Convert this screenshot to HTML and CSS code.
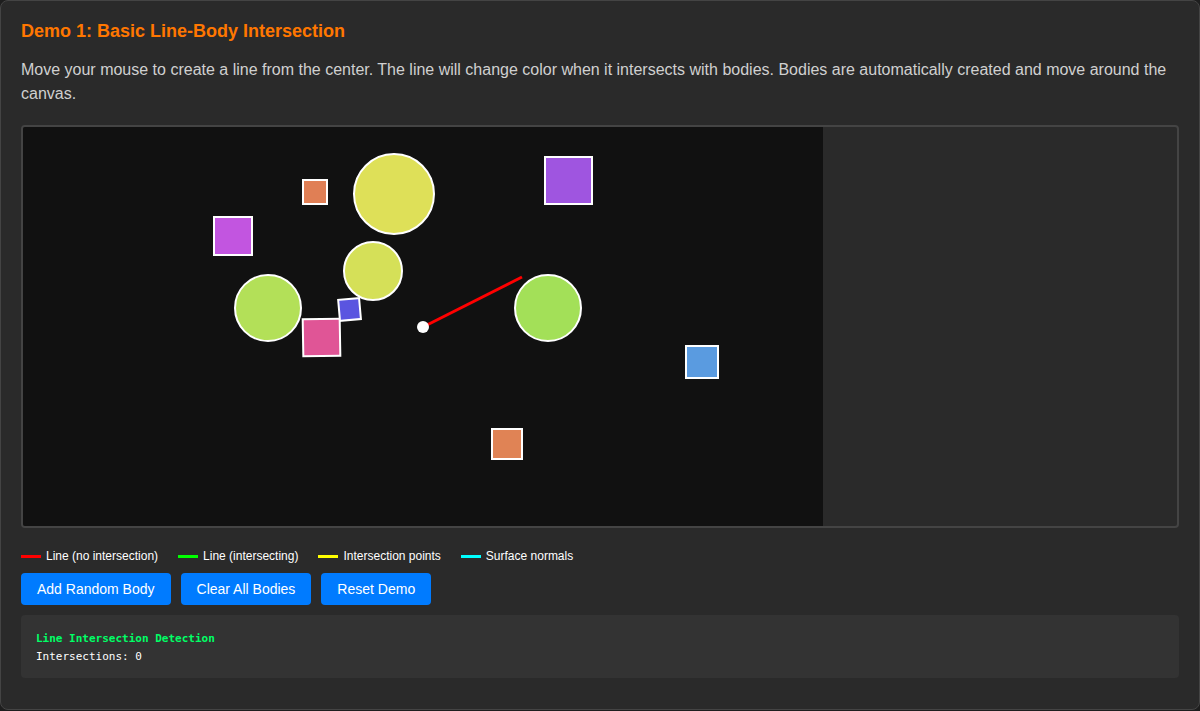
FILE: index.html
```html
<!DOCTYPE html>
<html>
<head>
<meta charset="utf-8">
<link rel="stylesheet" href="styles.css">
</head>
<body>
<div class="demo">
  <h2 class="title">Demo 1: Basic Line-Body Intersection</h2>
  <p class="desc">Move your mouse to create a line from the center. The line will change color when it intersects with bodies. Bodies are automatically created and move around the canvas.</p>
  <div class="canvas-wrap">
    <svg class="canvas" width="800" height="400" viewBox="0 0 800 400">
      <rect x="0" y="0" width="800" height="400" fill="#111"/>
      <g transform="translate(0 1)">
        <g stroke="#fff" stroke-width="2">
          <rect x="280" y="52" width="24" height="24" fill="#e07f55"/>
          <circle cx="371" cy="66" r="40" fill="#dee058"/>
          <rect x="191" y="89" width="38" height="38" fill="#c255e0"/>
          <rect x="522" y="29" width="47" height="47" fill="#9f55e0"/>
          <circle cx="350" cy="143" r="29" fill="#d5e058"/>
          <circle cx="245" cy="180" r="33" fill="#b3e058"/>
          <circle cx="525" cy="180" r="33" fill="#a3e058"/>
          <rect x="280" y="191" width="37" height="37" fill="#e05596" transform="rotate(-1 298 209)"/>
          <rect x="316" y="171" width="21" height="21" fill="#5a55e0" transform="rotate(-5 326 181)"/>
          <rect x="663" y="218" width="32" height="32" fill="#5a9be0"/>
          <rect x="469" y="301" width="30" height="30" fill="#e08355"/>
        </g>
        <line x1="400" y1="199" x2="499" y2="149" stroke="#f00" stroke-width="3"/>
        <circle cx="400" cy="199" r="6" fill="#fff"/>
      </g>
    </svg>
  </div>
  <div class="legend">
    <span class="item"><i class="sw red"></i>Line (no intersection)</span>
    <span class="item"><i class="sw green"></i>Line (intersecting)</span>
    <span class="item"><i class="sw yellow"></i>Intersection points</span>
    <span class="item"><i class="sw cyan"></i>Surface normals</span>
  </div>
  <div class="buttons">
    <button class="btn">Add Random Body</button>
    <button class="btn">Clear All Bodies</button>
    <button class="btn">Reset Demo</button>
  </div>
  <div class="info">
    <div class="info-title">Line Intersection Detection</div>
    <div>Intersections: 0</div>
  </div>
</div>
</body>
</html>
```
FILE: styles.css
```css
html, body {
  margin: 0;
  padding: 0;
  background: #1e1e1e;
}
body {
  font-family: "Liberation Sans", Arial, sans-serif;
  color: #ddd;
}
.demo {
  box-sizing: border-box;
  width: 1200px;
  height: 710px;
  background: #2a2a2a;
  border: 1px solid #444;
  border-radius: 8px;
  padding: 20px 20px;
}
.title {
  margin: 0;
  color: #ff7700;
  font-size: 18px;
  font-weight: bold;
  line-height: 21px;
}
.desc {
  margin: 16px 0 19px;
  font-size: 16px;
  line-height: 24px;
  color: #d0d0d0;
}
.canvas-wrap {
  height: 399px;
  border: 2px solid #444;
  border-radius: 4px;
  background: #2a2a2a;
  overflow: hidden;
}
.canvas {
  display: block;
}
.legend {
  display: flex;
  gap: 20px;
  margin-top: 20px;
  font-size: 12px;
  line-height: 16px;
  color: #fff;
}
.item {
  display: flex;
  align-items: center;
}
.sw {
  display: inline-block;
  width: 20px;
  height: 3px;
  margin-right: 5px;
}
.red { background: #f00; }
.green { background: #0f0; }
.yellow { background: #ff0; }
.cyan { background: #0ff; }
.buttons {
  display: flex;
  gap: 10px;
  margin-top: 9px;
}
.btn {
  font-family: "Liberation Sans", Arial, sans-serif;
  font-size: 14px;
  color: #fff;
  background: #007bff;
  border: none;
  border-radius: 4px;
  height: 32px;
  padding: 0 16px;
}
.info {
  margin-top: 10px;
  background: #333;
  border-radius: 4px;
  padding: 15px 15px 12px;
  font-family: "DejaVu Sans Mono", "Liberation Mono", monospace;
  font-size: 11px;
  line-height: 18px;
  color: #fff;
}
.info-title {
  color: #00ff66;
  font-weight: bold;
}
```
